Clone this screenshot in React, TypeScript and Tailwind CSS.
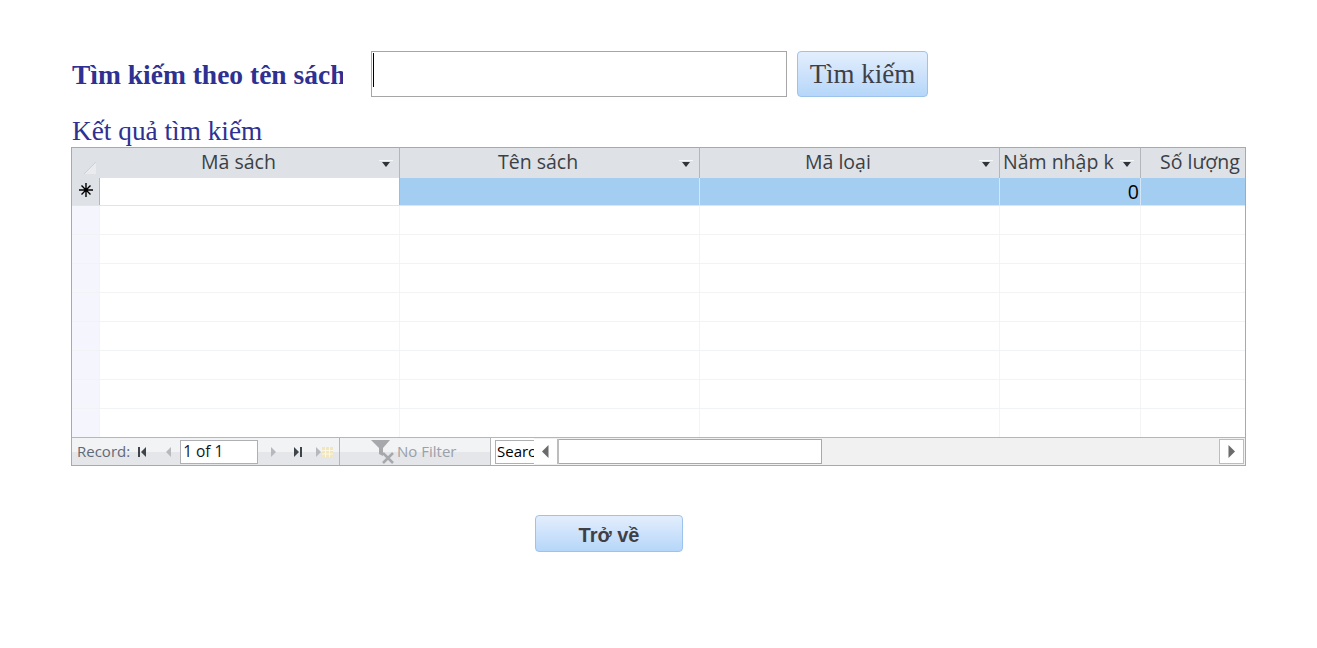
const gridFont = "font-['Open_Sans','Noto_Sans',sans-serif]"

const columns = [
  { name: "Mã sách", width: "w-[300px]", arrow: true, textClass: "pl-[101px]", line: "border-transparent" },
  { name: "Tên sách", width: "w-[300px]", arrow: true, textClass: "pl-[98px]", line: "border-[#b4b6b9]" },
  { name: "Mã loại", width: "w-[300px]", arrow: true, textClass: "pl-[105px]", line: "border-[#b4b6b9]" },
  { name: "Năm nhập kho", width: "w-[141px]", arrow: true, textClass: "pl-[3px] w-[114px] overflow-hidden", line: "border-[#b4b6b9]" },
  { name: "Số lượng", width: "w-[106px]", arrow: false, textClass: "pl-[19px]", line: "border-[#b4b6b9]" },
]

const cellWidths = ["w-[300px]", "w-[300px]", "w-[300px]", "w-[141px]", "w-[106px]"]
const emptyRows = [0, 1, 2, 3, 4, 5, 6, 7]

function SortArrow() {
  return (
    <svg width="14" height="8" viewBox="0 0 14 8">
      <rect x="0" y="0" width="14" height="1" fill="#f7f8f9" />
      <path d="M3 2h8L7 7z" fill="#2f343a" />
    </svg>
  )
}

function Triangle({ dir, color }: { dir: "left" | "right"; color: string }) {
  return (
    <svg width="7" height="13" viewBox="0 0 7 13">
      <path d={dir === "left" ? "M6.5 0v13L0 6.5z" : "M.5 0v13L7 6.5z"} fill={color} />
    </svg>
  )
}

function NavButton({ kind }: { kind: "first" | "prev" | "next" | "last" | "new" }) {
  if (kind === "new") {
    return (
      <svg width="20" height="12" viewBox="0 0 20 12">
        <path d="M1 1v10l5-5z" fill="#b5b8bc" />
        <path d="M7 1h11v10H7z" fill="#f1e6bd" />
        <path d="M10.5 1v10M14.5 1v10M7 4.5h11M7 8h11" stroke="#fbf7e6" strokeWidth="1" />
      </svg>
    )
  }
  return (
    <svg width="16" height="12" viewBox="0 0 16 12">
      {kind === "first" && (
        <g fill="#3f444b">
          <rect x="3" y="1" width="2" height="10" />
          <path d="M11 1v10L6 6z" />
        </g>
      )}
      {kind === "prev" && <path d="M11 1v10L6 6z" fill="#b5b8bc" />}
      {kind === "next" && <path d="M5 1v10l5-5z" fill="#b5b8bc" />}
      {kind === "last" && (
        <g fill="#3f444b">
          <path d="M4 1v10l5-5z" />
          <rect x="10" y="1" width="2" height="10" />
        </g>
      )}
    </svg>
  )
}

function FilterIcon() {
  return (
    <svg width="26" height="25" viewBox="0 0 26 25">
      <path d="M1 1h19l-7 8v8l-4-2V9z" fill="#a6a8ab" />
      <path d="M13 14l10 10M23 14L13 24" stroke="#a6a8ab" strokeWidth="2.5" />
    </svg>
  )
}

function Datasheet() {
  return (
    <div className={`w-[1175px] h-[319px] border border-[#a9a9a9] overflow-hidden text-[19.5px] leading-none ${gridFont}`}>
      <div className="flex h-[30px] bg-[#dee1e5]">
        <div className="w-[27px] h-full flex items-end justify-end pr-[3px] pb-[4px] shrink-0">
          <svg width="12" height="12" viewBox="0 0 12 12">
            <path d="M12 0v12H0z" fill="#e9ebee" />
            <path d="M12 0L0 12" stroke="#cdd1d6" />
          </svg>
        </div>
        {columns.map((col) => (
          <div
            key={col.name}
            className={`${col.width} ${col.line} shrink-0 flex items-center border-l text-[#3b3f46] relative overflow-hidden pb-[2px]`}
          >
            <span className={`${col.textClass} whitespace-nowrap`}>{col.name}</span>
            {col.arrow && (
              <div className="absolute right-[6px] top-[12px] flex">
                <SortArrow />
              </div>
            )}
          </div>
        ))}
      </div>

      <div className="flex h-[28px] border-b border-[#e3e4e7]">
        <div className="w-[27px] shrink-0 bg-[#dee1e5] flex items-center justify-center pb-[3px]">
          <svg width="14" height="14" viewBox="0 0 14 14">
            <path d="M7 0v14M0 7h14M2.5 2.5l9 9M11.5 2.5l-9 9" stroke="#000" strokeWidth="1.4" />
          </svg>
        </div>
        <div className="w-[300px] shrink-0 bg-white border-l border-[#b4b6b9]" />
        <div className="w-[300px] shrink-0 bg-[#a3cef1] border-l border-[#b4b6b9]" />
        <div className="w-[300px] shrink-0 bg-[#a3cef1] border-l border-[#d5e6f6]" />
        <div className="w-[141px] shrink-0 bg-[#a3cef1] border-l border-[#d5e6f6] flex items-center justify-end pr-[1px] text-black">
          0
        </div>
        <div className="w-[106px] shrink-0 bg-[#a3cef1] border-l border-[#d5e6f6]" />
      </div>

      {emptyRows.map((row) => (
        <div key={row} className={row < 7 ? "flex h-[29px] border-b border-[#f2f3f5]" : "flex h-[28px]"}>
          <div className="w-[27px] shrink-0 bg-[#f4f5fd]" />
          {cellWidths.map((w, i) => (
            <div key={i} className={`${w} shrink-0 border-l border-[#f4f4f6]`} />
          ))}
        </div>
      ))}

      <div className="flex h-[28px] border-t border-[#b4b6b9] text-[15px] text-[#5d6a78]">
        <div className="w-[268px] shrink-0 flex items-center pl-[5px] bg-[linear-gradient(#f2f3f5_50%,#e5e6e9_50%)] border-r border-[#b4b6b9]">
          <span>Record:</span>
          <div className="flex items-center ml-[5px]">
            <NavButton kind="first" />
            <span className="ml-[9px]">
              <NavButton kind="prev" />
            </span>
          </div>
          <div className="w-[78px] h-[24px] ml-[4px] shrink-0 bg-white border border-[#aeb0b3] flex items-center pl-[2px] text-[15.5px] text-[#10161d]">
            1 of 1
          </div>
          <div className="flex items-center ml-[8px]">
            <NavButton kind="next" />
            <span className="ml-[8px]">
              <NavButton kind="last" />
            </span>
            <span className="ml-[9px]">
              <NavButton kind="new" />
            </span>
          </div>
        </div>
        <div className="w-[151px] shrink-0 flex items-center pl-[30px] bg-[linear-gradient(#f2f3f5_50%,#e5e6e9_50%)] border-r border-[#b4b6b9] text-[#9aa0a8]">
          <FilterIcon />
          <span className="ml-[1px]">No Filter</span>
        </div>
        <div className="w-[43px] shrink-0 flex items-center pl-[4px] bg-white">
          <div className="w-[39px] h-[24px] border-y border-l border-[#aeb0b3] flex items-center pl-[1px] text-black overflow-hidden whitespace-nowrap">
            Search
          </div>
        </div>
        <div className="flex-1 flex items-center bg-[#f1f1f1]">
          <div className="w-[25px] h-[25px] bg-white border-r-2 border-[#bdbdbd] flex items-center justify-center">
            <Triangle dir="left" color="#6b6b6b" />
          </div>
          <div className="w-[263px] h-[25px] bg-white border border-l-0 border-[#a9a9a9]" />
          <div className="flex-1" />
          <div className="w-[25px] h-[25px] mr-[1px] bg-white border border-[#bdbdbd] flex items-center justify-center">
            <Triangle dir="right" color="#6b6b6b" />
          </div>
        </div>
      </div>
    </div>
  )
}

export default function App() {
  return (
    <div className="min-h-[648px] bg-white pt-[51px] pl-[71px] font-['Liberation_Serif',serif]">
      <div className="flex items-center h-[46px]">
        <div className="w-[272px] overflow-hidden whitespace-nowrap pl-[1px] pt-[2px] text-[27.5px] font-bold text-[#2e3192] shrink-0">
          Tìm kiếm theo tên sách
        </div>
        <div className="w-[416px] h-[46px] ml-[28px] border border-[#a6a6a6] pl-[1px] pt-[1px]">
          <div className="w-[1px] h-[34px] bg-black" />
        </div>
        <button className="w-[131px] h-[46px] ml-[10px] rounded-[4px] border border-[#9cc3ec] bg-[linear-gradient(#e3eefd,#b6d6f9)] text-[27px] text-[#3f3f46]">
          Tìm kiếm
        </button>
      </div>

      <div className="mt-[18px] h-[32px] pl-[1px] text-[27.3px] leading-[32px] text-[#2e3192]">Kết quả tìm kiếm</div>

      <Datasheet />

      <button className="block w-[148px] h-[37px] mt-[49px] ml-[464px] pt-[2px] rounded-[4px] border border-[#9cc3ec] bg-[linear-gradient(#e3eefd,#b6d6f9)] text-[20px] font-bold text-[#3f3f46] font-['Liberation_Sans',sans-serif]">
        Trở về
      </button>
    </div>
  )
}
